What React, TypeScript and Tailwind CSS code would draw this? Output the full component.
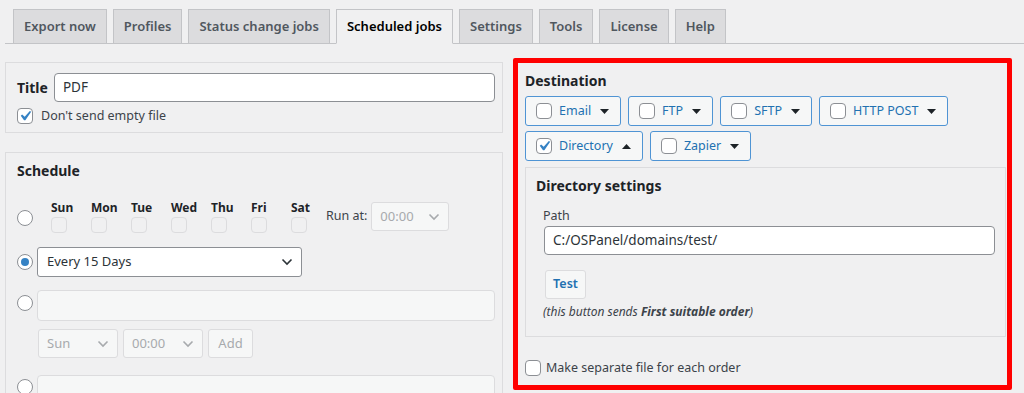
import React from "react";

const Check = () => (
  <svg width="20" height="20" viewBox="0 0 20 20" className="block -m-[3px] shrink-0">
    <path d="M14.83 4.89l1.34.94-5.81 8.38H9.02L5.78 9.67l1.34-1.25 2.57 2.4z" fill="#3582c4" />
  </svg>
);

function Checkbox({ checked = false, disabled = false }: { checked?: boolean; disabled?: boolean }) {
  return (
    <span
      className={
        disabled
          ? "w-[16px] h-[16px] rounded-[4px] border border-[#dcdcde] bg-[#f0f0f1] flex items-center justify-center shrink-0"
          : "w-[16px] h-[16px] rounded-[4px] border border-[#8c8f94] bg-white flex items-center justify-center shrink-0"
      }
    >
      {checked && <Check />}
    </span>
  );
}

function Radio({ checked = false }: { checked?: boolean }) {
  return (
    <span className="w-[16px] h-[16px] rounded-full border border-[#8c8f94] bg-white flex items-center justify-center shrink-0">
      {checked && <span className="w-[8px] h-[8px] rounded-full bg-[#3582c4]" />}
    </span>
  );
}

const Chevron = ({ color }: { color: string }) => (
  <svg width="12" height="8" viewBox="0 0 12 8" className="block">
    <path d="M1.5 1.5 L6 6 L10.5 1.5" fill="none" stroke={color} strokeWidth="1.6" />
  </svg>
);

const Caret = ({ up = false }: { up?: boolean }) => (
  <svg width="9" height="5" viewBox="0 0 9 5" className="block">
    {up ? <path d="M0 5 L4.5 0 L9 5 Z" fill="#1d2327" /> : <path d="M0 0 L9 0 L4.5 5 Z" fill="#1d2327" />}
  </svg>
);

function Tab({ label, active = false }: { label: string; active?: boolean }) {
  return (
    <div
      className={
        active
          ? "h-[35px] -mb-px px-[10px] border border-[#c3c4c7] border-b-[#f0f0f1] bg-[#f0f0f1] text-[13px] font-semibold text-[#000] leading-[33px] whitespace-nowrap"
          : "h-[35px] -mb-px px-[10px] border border-[#c3c4c7] bg-[#dcdcde] text-[13px] font-semibold text-[#50575e] leading-[33px] whitespace-nowrap"
      }
    >
      {label}
    </div>
  );
}

function DestBtn({ label, checked = false, up = false }: { label: string; checked?: boolean; up?: boolean }) {
  return (
    <div className="h-[30px] flex items-center pl-[10px] pr-[11px] border border-[#4f94d4] rounded-[3px] bg-[#f6f7f7]">
      <Checkbox checked={checked} />
      <span className="ml-[7px] text-[12.5px] text-[#2271b1]">{label}</span>
      <span className="ml-[9px]">
        <Caret up={up} />
      </span>
    </div>
  );
}

const days = ["Sun", "Mon", "Tue", "Wed", "Thu", "Fri", "Sat"];

export default function App() {
  return (
    <div className="w-[1024px] h-[393px] overflow-hidden bg-[#f0f0f1] font-['Noto_Sans',sans-serif] text-[#3c434a]">
      {/* Tabs */}
      <div className="ml-[5px] pl-[8px] pt-[9px] flex items-end gap-[6px] border-b border-[#c3c4c7]">
        <Tab label="Export now" />
        <Tab label="Profiles" />
        <Tab label="Status change jobs" />
        <Tab label="Scheduled jobs" active />
        <Tab label="Settings" />
        <Tab label="Tools" />
        <Tab label="License" />
        <Tab label="Help" />
      </div>

      <div className="flex items-start gap-[10px] px-[5px] pt-[14px]">
        {/* Left column */}
        <div className="w-[498px] mt-[4px] flex flex-col gap-[19px]">
          <div className="h-[71px] border border-[#dcdcde] pt-[10px] pl-[11px] pr-[7px]">
            <div className="flex items-center gap-[6px]">
              <span className="text-[14px] font-bold text-[#1d2327]">Title</span>
              <div className="flex-1 h-[29px] bg-white border border-[#8c8f94] rounded-[4px] px-[8px] flex items-center text-[13.5px] text-[#2c3338]">
                PDF
              </div>
            </div>
            <div className="flex items-center gap-[8px] mt-[5px] text-[12.5px]">
              <Checkbox checked />
              <span>Don't send empty file</span>
            </div>
          </div>

          <div className="border border-[#dcdcde] h-[260px] pt-[8px] pl-[11px] pr-[7px]">
            <div className="text-[14px] font-bold text-[#1d2327] leading-[20px]">Schedule</div>
            {/* Row 1 */}
            <div className="flex items-start mt-[20px]">
              <span className="mt-[9px]">
                <Radio />
              </span>
              <div className="flex ml-[18px]">
                {days.map((d) => (
                  <div key={d} className="w-[40px] flex flex-col">
                    <span className="text-[12px] font-bold leading-[14px] text-[#1d2327]">{d}</span>
                    <span className="mt-[2px]">
                      <Checkbox disabled />
                    </span>
                  </div>
                ))}
              </div>
              <span className="ml-[-5px] mt-[6px] text-[12.5px] leading-[18px] text-[#3c434a]">Run at:</span>
              <div className="ml-[4px] mt-[1px] w-[78px] h-[29px] border border-[#dcdcde] rounded-[3px] bg-[#f6f7f7] flex items-center justify-between pl-[8px] pr-[8px] text-[13px] text-[#a7aaad]">
                <span>00:00</span>
                <Chevron color="#a7aaad" />
              </div>
            </div>
            {/* Row 2 */}
            <div className="flex items-center gap-[4px] mt-[14px]">
              <Radio checked />
              <div className="w-[265px] h-[30px] bg-white border border-[#8c8f94] rounded-[3px] flex items-center justify-between pl-[9px] pr-[8px] text-[13px] text-[#2c3338]">
                <span>Every 15 Days</span>
                <Chevron color="#2c3338" />
              </div>
            </div>
            {/* Row 3 */}
            <div className="flex items-start gap-[4px] mt-[13px]">
              <span className="mt-[5px]">
                <Radio />
              </span>
              <div className="flex-1 h-[31px] bg-[#f6f7f7] border border-[#dcdcde] rounded-[4px]" />
            </div>
            {/* Row 4 */}
            <div className="flex items-center gap-[5px] mt-[8px] ml-[21px]">
              <div className="w-[80px] h-[29px] border border-[#dcdcde] rounded-[3px] bg-[#f6f7f7] flex items-center justify-between pl-[8px] pr-[8px] text-[13px] text-[#a7aaad]">
                <span>Sun</span>
                <Chevron color="#a7aaad" />
              </div>
              <div className="w-[80px] h-[29px] border border-[#dcdcde] rounded-[3px] bg-[#f6f7f7] flex items-center justify-between pl-[8px] pr-[8px] text-[13px] text-[#a7aaad]">
                <span>00:00</span>
                <Chevron color="#a7aaad" />
              </div>
              <div className="w-[45px] h-[29px] border border-[#dcdcde] rounded-[3px] bg-[#f6f7f7] flex items-center justify-center text-[13px] text-[#a7aaad]">
                Add
              </div>
            </div>
            {/* Row 5 */}
            <div className="flex items-start gap-[4px] mt-[17px]">
              <span className="mt-[4px]">
                <Radio />
              </span>
              <div className="flex-1 h-[31px] bg-[#f6f7f7] border border-[#dcdcde] rounded-[4px]" />
            </div>
          </div>
        </div>

        {/* Right column with red highlight */}
        <div className="w-[499px] h-[332px] border-[5px] border-[#ff0000] rounded-[2px] pl-[7px] pt-[8px]">
          <div className="text-[14px] font-bold text-[#1d2327] leading-[20px]">Destination</div>
          <div className="flex flex-col gap-[5px] mt-[5px]">
            <div className="flex gap-[7px]">
              <DestBtn label="Email" />
              <DestBtn label="FTP" />
              <DestBtn label="SFTP" />
              <DestBtn label="HTTP POST" />
            </div>
            <div className="flex gap-[7px]">
              <DestBtn label="Directory" checked up />
              <DestBtn label="Zapier" />
            </div>
          </div>
          <div className="w-[481px] h-[170px] mt-[6px] border border-[#dcdcde] pt-[8px] pl-[10px] pr-[10px]">
            <div className="text-[14px] font-bold text-[#1d2327] leading-[20px]">Directory settings</div>
            <div className="ml-[7px] mt-[11px] text-[12.5px] leading-[18px] text-[#3c434a]">Path</div>
            <div className="ml-[8px] mt-[1px] h-[29px] bg-white border border-[#8c8f94] rounded-[4px] flex items-center px-[8px] text-[13.5px] text-[#2c3338]">
              C:/OSPanel/domains/test/
            </div>
            <div className="ml-[9px] mt-[15px] w-[41px] h-[29px] bg-[#f6f7f7] border border-[#dcdcde] rounded-[3px] flex items-center justify-center text-[12.5px] font-semibold text-[#2271b1]">
              Test
            </div>
            <div className="ml-[7px] mt-[5px] text-[12px] italic leading-[16px] text-[#3c434a]">
              (this button sends <b>First suitable order</b>)
            </div>
          </div>
          <div className="flex items-center gap-[5px] mt-[22px] text-[12.5px] text-[#3c434a]">
            <Checkbox />
            <span>Make separate file for each order</span>
          </div>
        </div>
      </div>
    </div>
  );
}
